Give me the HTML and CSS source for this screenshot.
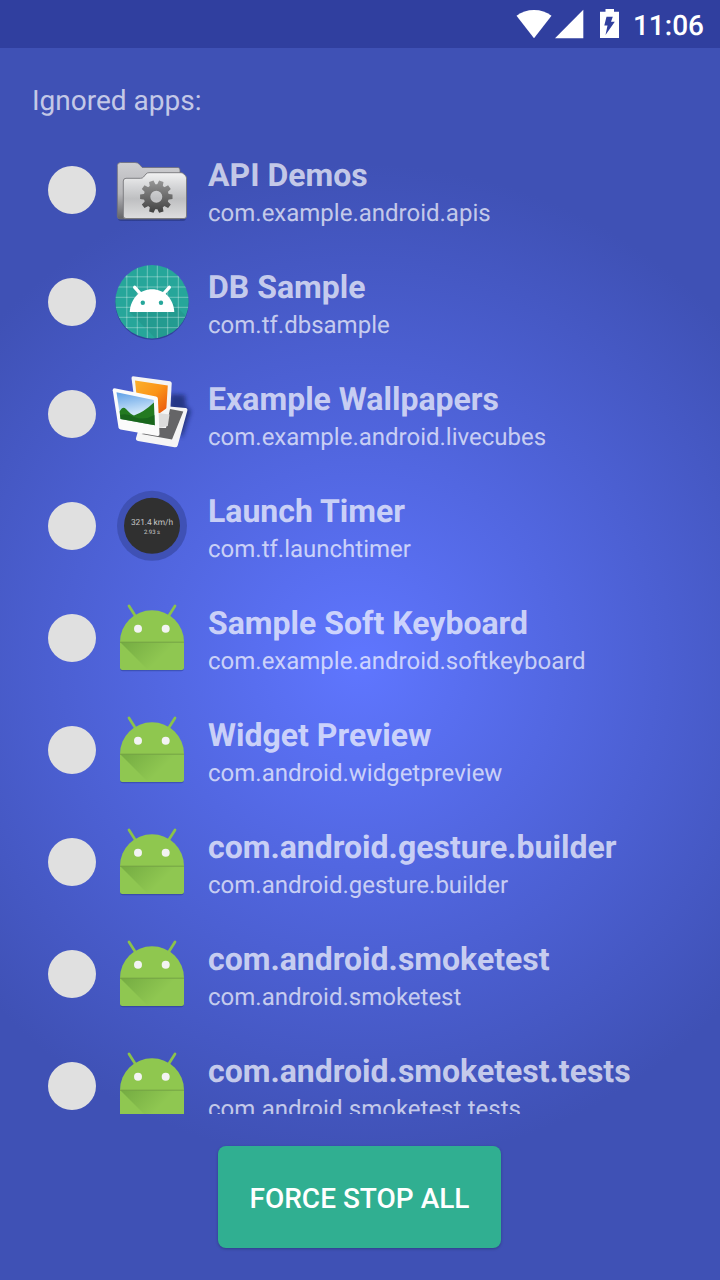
FILE: index.html
```
<!DOCTYPE html>
<html lang="en">
<head>
<meta charset="utf-8">
<title>Ignored apps</title>
<link rel="stylesheet" href="styles.css">
</head>
<body>
<svg class="defs" width="0" height="0" aria-hidden="true">
  <defs>
    <linearGradient id="back" x1="0" y1="0" x2="0" y2="1"><stop offset="0" stop-color="#cfcfd2"/><stop offset=".55" stop-color="#b5b5b8"/><stop offset="1" stop-color="#626266"/></linearGradient>
    <linearGradient id="front" x1="0" y1="0" x2="0" y2="1"><stop offset="0" stop-color="#f2f2f2"/><stop offset=".3" stop-color="#d5d6d8"/><stop offset=".57" stop-color="#bebfc1"/><stop offset="1" stop-color="#dededf"/></linearGradient>
    <linearGradient id="gear" gradientUnits="userSpaceOnUse" x1="0" y1="-17" x2="0" y2="17"><stop offset="0" stop-color="#989898"/><stop offset="1" stop-color="#3e3e3e"/></linearGradient>
    <linearGradient id="sky" x1="0" y1="0" x2=".2" y2="1"><stop offset="0" stop-color="#5d9fe6"/><stop offset=".7" stop-color="#cfe6fa"/></linearGradient>
    <linearGradient id="orange" x1="0" y1="0" x2="1" y2="1"><stop offset="0" stop-color="#fbb02c"/><stop offset=".5" stop-color="#fb9418"/><stop offset="1" stop-color="#e8500c"/></linearGradient>
    <linearGradient id="fold" gradientUnits="userSpaceOnUse" x1="8" y1="46" x2="36" y2="74"><stop offset="0" stop-color="#33691e" stop-opacity=".3"/><stop offset="1" stop-color="#33691e" stop-opacity="0"/></linearGradient>
    <clipPath id="disc"><circle cx="40" cy="39.7" r="36.7"/></clipPath>
    <filter id="soft" x="-40%" y="-40%" width="180%" height="180%"><feGaussianBlur stdDeviation="2"/></filter>
    <symbol id="droid" viewBox="0 0 80 80">
      <g transform="translate(0 -2)">
      <g fill="#1b2f6e" opacity=".35"><rect x="8" y="60" width="64" height="15.300" rx="3"/></g>
      <path d="M17 10l7 11M63 10l-7 11" stroke="#8bc34a" stroke-width="2.700" stroke-linecap="round"/>
      <path d="M8 46a32 31.700 0 0 1 64 0z" fill="#8fc74f"/>
      <path d="M8 46h64v25.500a2.500 2.500 0 0 1-2.500 2.500h-59a2.500 2.500 0 0 1-2.500-2.500z" fill="#8fc751"/>
      <path d="M8 46h64L50 74H36z" fill="url(#fold)"/>
      <path d="M8 46.200h64" stroke="#74a344" stroke-width="1"/>
      <circle cx="26" cy="32.700" r="4" fill="#f3f3f3"/><circle cx="53.700" cy="32.700" r="4" fill="#f3f3f3"/>
      </g>
    </symbol>
  </defs>
</svg>
<header class="status">
  <svg width="104" height="30" viewBox="516 9 104 30">
    <path d="M534 38.300L516.500 15.700Q524 10 534 10t17.500 5.700z" fill="#fff"/>
    <path d="M555 38.300L583.300 9.700V38.300z" fill="#fff"/>
    <path d="M605.500 9h8.500v2.800h5V38h-19V11.800h5.500z" fill="#fff"/>
    <path d="M606.500 16.800h6.300l-1.800 5h3.800l-9.300 13.200 2-9.500h-3.200z" fill="#303f9f"/>
  </svg>
  <span class="clock">11:06</span>
</header>
<main class="screen">
  <h1 class="heading">Ignored apps:</h1>
  <ul class="apps">
    <li class="app"><span class="toggle"></span>
      <svg class="icon" viewBox="0 0 80 80">
        <rect x="6" y="60" width="68" height="11" rx="3" fill="#17225d" opacity=".4"/>
        <path d="M5.300 15.500Q5.500 12.500 8.500 12.500H23q3 0 4.500 2l2.700 3H66q2 0 2 2.500V69H8q-2.700 0-2.700-3z" fill="url(#back)" stroke="#6e6f78" stroke-width=".8"/>
        <path d="M11.300 31q0-2.700 2.700-2.700h14.500q2 0 3-1.300l2.500-3q1-1.300 3-1.300H69q1.500 0 2.500 1l2 2q1 1 1 2.500V66q0 2.500-2.500 2.500H14q-2.700 0-2.700-2.500z" fill="url(#front)" stroke="#77777b" stroke-width=".9"/>
        <g transform="translate(44.300 46.700)" fill="url(#gear)">
          <path fill-rule="evenodd" d="M0-12.500a12.500 12.500 0 1 1 0 25a12.500 12.500 0 1 1 0-25M0-6a6 6 0 1 0 0 12a6 6 0 1 0 0-12"/>
          <path d="M11-3L16.200-2.300V2.300L11 3zM-11-3L-16.200-2.300V2.300L-11 3zM10.700 4L14.500 7.700 11.800 11.400 7.100 8.900zM-10.700 4L-14.500 7.700-11.800 11.400-7.100 8.900zM10.700-4L14.500-7.700 11.800-11.400 7.100-8.900zM-10.700-4L-14.500-7.700-11.800-11.400-7.100-8.900zM6.300 9.500L7.200 14.700 2.800 16.100.5 11.400zM-6.300 9.500L-7.200 14.700-2.800 16.100-.5 11.400zM6.300-9.500L7.200-14.700 2.800-16.100.5-11.400zM-6.300-9.500L-7.200-14.700-2.800-16.100-.5-11.400z"/>
        </g>
      </svg>
      <div class="text"><b class="name">API Demos</b><span class="package">com.example.android.apis</span></div></li>
    <li class="app"><span class="toggle"></span>
      <svg class="icon" viewBox="0 0 80 80">
        <circle cx="40" cy="41" r="36.700" fill="#1b2a70" opacity=".5"/>
        <circle cx="40" cy="39.700" r="36.700" fill="#26a69a"/>
        <g clip-path="url(#disc)">
          <path d="M17.700 50L45 78 80 60 62 42z" fill="#1b8077" opacity=".28"/>
          <path d="M14.800 0v80M25.300 0v80M35.300 0v80M45.300 0v80M55.700 0v80M66.300 0v80M0 14.800h80M0 25h80M0 35.300h80M0 45.300h80M0 55.300h80M0 65.700h80" stroke="#fff" stroke-opacity=".38" stroke-width=".9"/>
        </g>
        <path d="M22.700 25.300l6 6.700M57.300 25.300l-6 6.700" stroke="#fff" stroke-width="3.300" stroke-linecap="round"/>
        <path d="M17.700 50C18.500 36.500 28 27.300 40 27.300S61.500 36.500 62.300 50z" fill="#fff"/>
        <circle cx="30.800" cy="40.700" r="2.200" fill="#26a69a"/><circle cx="49" cy="40.700" r="2.200" fill="#26a69a"/>
      </svg>
      <div class="text"><b class="name">DB Sample</b><span class="package">com.tf.dbsample</span></div></li>
    <li class="app"><span class="toggle"></span>
      <svg class="icon" viewBox="0 0 80 80">
        <g transform="translate(0 -6)">
        <path d="M59 26L73 27 74 38 79 43 70 70 56 44z" fill="#111d55" opacity=".6" filter="url(#soft)"/>
        <path d="M21 8.200L58 13.200q1.800.3 1.700 2.300L57.500 58 25 52 19.500 10q0-1.800 1.500-1.800z" fill="#f4f4f4"/>
        <path d="M23 12.500L55.800 17.500 54 46 26 42z" fill="url(#orange)"/>
        <path d="M57 38.500L73.500 40q2.500.5 1.800 2.700L65.700 77.500q-.8 2.200-3.200 1.800L26 73q-2.500-.7-2-3L27 60z" fill="#f5f5f5"/>
        <path d="M58 41L71.300 43.500 60 71.500 29.500 66 46 60 54 60z" fill="#656567"/>
        <path d="M46 45l11.500 1.500L55.800 58 47 60z" fill="#dcdcdc"/>
        <path d="M2.500 20.300L44 28.500q1.800.5 1.900 2.300L47.500 66q0 2.300-2 2L8.500 61.500Q6.800 61 6.500 59.500L.7 22.300q-.2-2 1.800-2z" fill="#fbfbfb"/>
        <path d="M4.500 24.300L41.800 32 42.800 57.300 8.500 51z" fill="url(#sky)"/>
        <path d="M7.600 43.500Q10.500 37.500 14 41q5 5.500 8 6.500Q32 44 41.900 34.500L42.800 57.300 8.500 51z" fill="#237a20"/>
        <path d="M8 47q7-2 14 2 10 4 20.600-2l.2 10.300L8.500 51z" fill="#13591a" opacity=".6"/>
        </g>
      </svg>
      <div class="text"><b class="name">Example Wallpapers</b><span class="package">com.example.android.livecubes</span></div></li>
    <li class="app"><span class="toggle"></span>
      <svg class="icon" viewBox="0 0 80 80">
        <circle cx="40" cy="39.800" r="35" fill="#3f51b5"/><circle cx="40" cy="39.800" r="28" fill="#303030"/>
        <text class="speed" x="40" y="39.300" textLength="42">321.4 km/h</text>
        <text class="time" x="40" y="47.700" textLength="16">2.93 s</text>
      </svg>
      <div class="text"><b class="name">Launch Timer</b><span class="package">com.tf.launchtimer</span></div></li>
    <li class="app"><span class="toggle"></span><svg class="icon"><use href="#droid"/></svg>
      <div class="text"><b class="name">Sample Soft Keyboard</b><span class="package">com.example.android.softkeyboard</span></div></li>
    <li class="app"><span class="toggle"></span><svg class="icon"><use href="#droid"/></svg>
      <div class="text"><b class="name">Widget Preview</b><span class="package">com.android.widgetpreview</span></div></li>
    <li class="app"><span class="toggle"></span><svg class="icon"><use href="#droid"/></svg>
      <div class="text"><b class="name">com.android.gesture.builder</b><span class="package">com.android.gesture.builder</span></div></li>
    <li class="app"><span class="toggle"></span><svg class="icon"><use href="#droid"/></svg>
      <div class="text"><b class="name">com.android.smoketest</b><span class="package">com.android.smoketest</span></div></li>
    <li class="app"><span class="toggle"></span><svg class="icon"><use href="#droid"/></svg>
      <div class="text"><b class="name">com.android.smoketest.tests</b><span class="package">com.android.smoketest.tests</span></div></li>
  </ul>
  <button class="stop">FORCE STOP ALL</button>
</main>
</body>
</html>
```
FILE: styles.css
```
* { box-sizing: border-box; }
body {
  margin: 0;
  width: 720px;
  height: 1280px;
  overflow: hidden;
  display: flex;
  flex-direction: column;
  font-family: Roboto, "Noto Sans", sans-serif;
  text-rendering: geometricPrecision;
}
.defs { position: absolute; }
.status {
  height: 48px;
  flex: none;
  display: flex;
  align-items: center;
  justify-content: flex-end;
  gap: 13px;
  padding-right: 16px;
  background: #303f9f;
}
.clock {
  color: #fff;
  font-size: 28px;
  font-weight: 500;
  line-height: 34px;
  padding-top: 3px;
}
.screen {
  flex: 1;
  min-height: 0;
  display: flex;
  flex-direction: column;
  align-items: center;
  padding: 32px 32px;
  background: radial-gradient(circle 500px at 50% 50%, #5f76ff, #3f51b5);
}
.heading {
  align-self: stretch;
  height: 54px;
  margin: 0;
  padding-top: 4px;
  font-size: 28px;
  line-height: 34px;
  font-weight: 400;
  color: rgba(255, 255, 255, .7);
}
.apps {
  align-self: stretch;
  height: 980px;
  flex: none;
  margin: 0;
  padding: 0 16px;
  overflow: hidden;
  list-style: none;
}
.app {
  height: 112px;
  display: flex;
  align-items: center;
  gap: 16px;
}
.toggle {
  width: 48px;
  height: 48px;
  border-radius: 50%;
  background: #e0e0e0;
}
.icon { width: 80px; height: 80px; flex: none; overflow: visible; }
.text {
  display: flex;
  flex-direction: column;
  padding-top: 8px;
  white-space: nowrap;
  color: rgba(255, 255, 255, .7);
}
.name { font-size: 32px; line-height: 38px; font-weight: 700; }
.package { font-size: 24px; line-height: 38px; }
.speed, .time {
  fill: #c4c4c4;
  text-anchor: middle;
  font-size: 8.4px;
}
.time { font-size: 6px; }
.stop {
  width: 283px;
  height: 102px;
  flex: none;
  margin-top: 32px;
  margin-left: -1px;
  border: 0;
  border-radius: 8px;
  background: #30af91;
  box-shadow: 0 1px 3px rgba(0, 0, 0, .25);
  color: #fff;
  font: 500 28px/34px Roboto, "Noto Sans", sans-serif;
  padding: 4px 0 0;
}
```
